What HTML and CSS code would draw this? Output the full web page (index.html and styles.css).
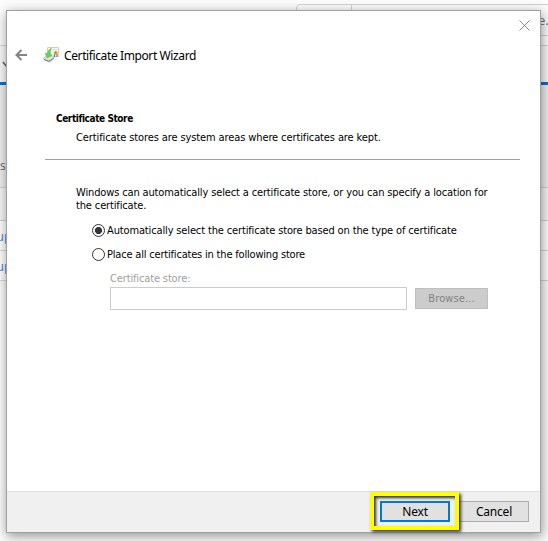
FILE: index.html
```html
<!DOCTYPE html>
<html lang="en">
<head>
<meta charset="utf-8">
<title>Certificate Import Wizard</title>
<link rel="stylesheet" href="styles.css">
</head>
<body>
<div class="page">
  <div class="topbar"><div class="search"><span class="scope"></span><span class="query">e.</span></div></div>
  <div class="tabs"><svg width="10" height="8" viewBox="0 0 10 8"><path d="M1 1l4 5 4-5" fill="none" stroke="#666" stroke-width="1.6"/></svg></div>
  <div class="panel"><span>se</span></div>
  <div class="thead"></div>
  <div class="row">up</div>
  <div class="row">up</div>
</div>
<main class="dialog">
  <header class="titlebar">
    <svg class="back" width="13" height="12" viewBox="0 0 13 12"><path d="M6.5 1L1.5 6l5 5M1.5 6H12" fill="none" stroke="#858585" stroke-width="2"/></svg>
    <svg class="cert" width="17" height="17" viewBox="0 0 17 17">
      <path d="M4.5 1.5h11v9h-11z" fill="#f8f6f0" stroke="#d8ccb6"/>
      <path d="M9 3.5h5M10 5.5h2" stroke="#e0ddd6"/>
      <path d="M.5 12l3-2h8l-1 3-4 3-5-2z" fill="#e2e3e4" stroke="#aaa" stroke-width=".7"/>
      <path d="M1 13.5l5 1.7 4.5-3" fill="none" stroke="#777"/>
      <path d="M8.5 2.5C6.3 3 5 4.5 4.8 7.2L2.2 7.6 4.3 12 9 9 7.3 7.9C7.1 5.5 7.5 3.8 8.5 2.5z" fill="#62d64f" stroke="#4bb440" stroke-width=".5"/>
      <path d="M11.5 8v3M14 8v3" stroke="#3f83df" stroke-width="1.1"/>
      <circle cx="12.8" cy="6.9" r="1.9" fill="#e9a21d"/><circle cx="12.8" cy="6.7" r=".8" fill="#b86c13"/>
    </svg>
    <h1>Certificate Import Wizard</h1>
    <svg class="close" width="11" height="11" viewBox="0 0 11 11"><path d="M.5 .5l10 10M10.5 .5l-10 10" fill="none" stroke="#888"/></svg>
  </header>
  <section class="heading">
    <h2>Certificate Store</h2>
    <p>Certificate stores are system areas where certificates are kept.</p>
  </section>
  <section class="content">
    <p class="intro">Windows can automatically select a certificate store, or you can specify a location for<br>the certificate.</p>
    <div class="option first"><i class="radio checked"></i><span>Automatically select the certificate store based on the type of certificate</span></div>
    <div class="option second"><i class="radio"></i><span>Place all certificates in the following store</span></div>
    <div class="store">
      <div class="label">Certificate store:</div>
      <div class="fields"><div class="field"></div><div class="browse">Browse...</div></div>
    </div>
  </section>
  <footer>
    <div class="highlight"><div class="button next">Next</div></div>
    <div class="button cancel">Cancel</div>
  </footer>
</main>
</body>
</html>
```
FILE: styles.css
```css
* { box-sizing: border-box; }
body { margin: 0; width: 548px; height: 541px; overflow: hidden; position: relative; background: #fafafa; font-family: "DejaVu Sans Condensed", "DejaVu Sans", sans-serif; font-stretch: condensed; font-size: 11px; letter-spacing: -.14px; color: #000; }
h1, h2, p { margin: 0; font-weight: normal; }
svg { display: block; flex: none; }

.page { font-family: "Open Sans", sans-serif; font-stretch: normal; letter-spacing: 0; }
.topbar { height: 46px; padding: 4px 0 0 296px; border-bottom: 1px solid #d5d5d5; background: #fcfcfc; }
.search { display: flex; height: 32px; width: 270px; border: 1px solid #d2d2d2; border-radius: 4px; }
.scope { width: 55px; flex: none; border-right: 1px solid #d2d2d2; }
.query { padding: 6px 0 0 186px; font-size: 13px; line-height: 18px; color: #777; }
.tabs { height: 39px; padding: 15px 0 0 2px; background: #f8f8f8; border-bottom: 3px solid #0a6ed1; }
.panel { height: 103px; padding: 72px 0 0 0; background: #ededed; border-bottom: 1px solid #d0d0d0; color: #666; font-size: 12px; line-height: 18px; }
.thead { height: 33px; background: #f5f4f4; border-bottom: 1px solid #d0d0d0; }
.row { height: 30px; background: #fdfdfd; border-bottom: 1px solid #d5d5d5; color: #3a8ad8; font-size: 13px; line-height: 30px; text-indent: -4px; }

.dialog { position: absolute; left: 6px; top: 10px; width: 535px; height: 523px; display: flex; flex-direction: column; background: #fff; border: 1px solid #a0a0a0; box-shadow: 1px 3px 11px rgba(0,0,0,.42); }
.titlebar { display: flex; height: 90px; padding: 0 10px 0 8px; }
.back { margin-top: 38px; }
.cert { margin: 35px 0 0 15px; }
h1 { margin: 35px auto 0 4px; font: 12px/20px "Noto Sans", sans-serif; letter-spacing: -.39px; white-space: nowrap; }
.close { margin-top: 9px; }
.heading { height: 59px; margin: 0 20px 0 38px; padding: 10px 0 0 11px; border-bottom: 1px solid #a0a0a0; }
h2 { font-size: 10px; font-weight: bold; line-height: 16px; letter-spacing: -.42px; }
.heading p { margin: 2px 0 0 20px; line-height: 18px; white-space: nowrap; letter-spacing: -.11px; }
.content { flex: 1; padding: 26px 0 0 69px; }
.intro { line-height: 13px; white-space: nowrap; }
.option { display: flex; align-items: center; gap: 2px; height: 16px; margin: 8px 0 0 16px; white-space: nowrap; }
.option.first { margin-top: 10px; }
.option.second { letter-spacing: -.19px; }
.radio { width: 13px; height: 13px; border: 1px solid #333; border-radius: 50%; background: #fff; }
.radio.checked { background: radial-gradient(circle, #333 0 3.2px, #fff 3.9px); }
.store { margin: 9px 0 0 34px; color: #a0a0a0; }
.label { line-height: 15px; }
.fields { display: flex; gap: 8px; align-items: center; margin-top: 1px; }
.field { width: 297px; height: 23px; border: 1px solid #ccc; }
.browse { width: 73px; height: 21px; border: 1px solid #bfbfbf; background: #ccc; color: #838383; line-height: 20px; letter-spacing: .1px; text-align: center; }
footer { display: flex; height: 41px; border-top: 1px solid #dfdfdf; background: #f0f0f0; padding-left: 363px; }
.highlight { width: 89px; height: 38px; flex: none; border: 4px solid #ff0; padding: 5px 5px 0 6px; box-shadow: 2px 2px 3px #333, inset 2px 2px 3px #333; position: relative; z-index: 1; }
.button { height: 21px; border: 1px solid #adadad; background: #e1e1e1; font: 12px/20px "Noto Sans", sans-serif; letter-spacing: -.2px; text-align: center; }
.next { width: 70px; border: 2px solid #0078d7; line-height: 18px; }
.cancel { width: 70px; margin: 9px 0 0 0; }
```
